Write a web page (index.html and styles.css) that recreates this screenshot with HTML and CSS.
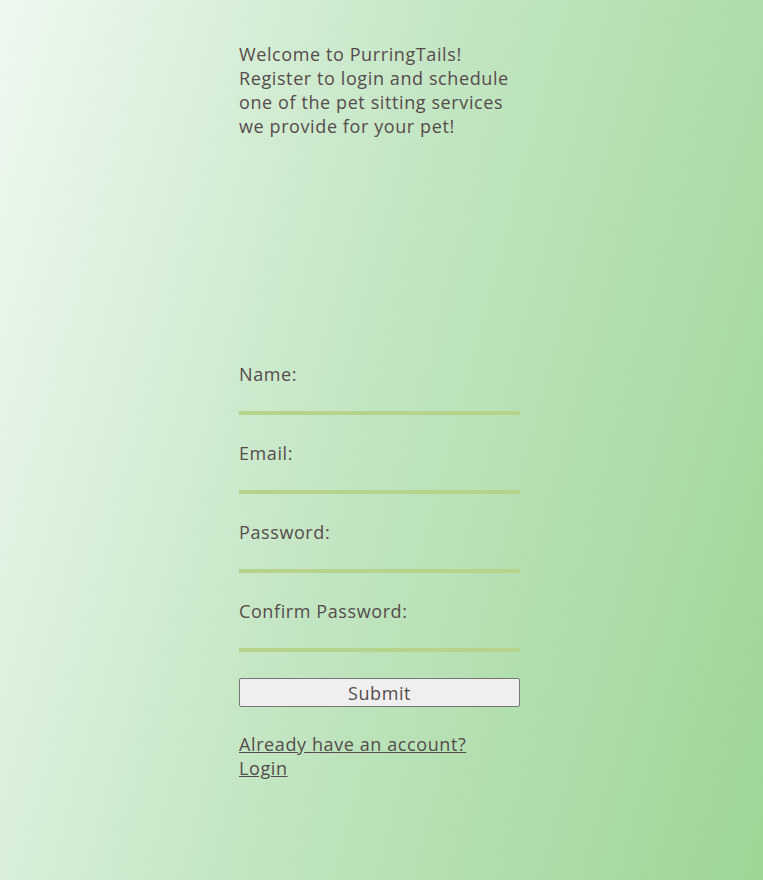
FILE: index.html
```html
<!DOCTYPE html>
<html lang="en">
<head>
<meta charset="utf-8">
<title>PurringTails - Register</title>
<link rel="stylesheet" href="styles.css">
</head>
<body>
<main class="page">
  <p class="intro">Welcome to PurringTails! Register to login and schedule one of the pet sitting services we provide for your pet!</p>
  <form class="form">
    <label class="field">
      <span class="label">Name:</span>
      <input class="input" type="text">
    </label>
    <label class="field">
      <span class="label">Email:</span>
      <input class="input" type="email">
    </label>
    <label class="field">
      <span class="label">Password:</span>
      <input class="input" type="password">
    </label>
    <label class="field">
      <span class="label">Confirm Password:</span>
      <input class="input" type="password">
    </label>
    <button class="submit" type="button">Submit</button>
    <a class="link" href="#">Already have an account? Login</a>
  </form>
</main>
</body>
</html>
```

FILE: styles.css
```css
html, body {
  margin: 0;
  padding: 0;
  height: 100%;
}
body {
  background: linear-gradient(105deg, #eef8ef 0%, #c4e6c4 45%, #9cd694 100%);
  font-family: "Open Sans", "Noto Sans", sans-serif;
  color: #554c4c;
  font-size: 18px;
  letter-spacing: 0.6px;
  line-height: 24px;
}
.page {
  width: 281px;
  margin-left: 239px;
  padding-top: 42px;
}
.intro {
  margin: 0;
  width: 281px;
}
.form {
  display: flex;
  flex-direction: column;
  margin-top: 224px;
}
.field {
  display: flex;
  flex-direction: column;
  margin-bottom: 26px;
}
.label {
  display: block;
  height: 24px;
}
.input {
  margin-top: 11px;
  height: 14px;
  padding: 0;
  border: 0;
  border-bottom: 4px solid #b6d38b;
  background: transparent;
  outline: none;
  width: 281px;
  box-sizing: content-box;
}
.submit {
  height: 29px;
  width: 281px;
  margin-top: 0;
  padding: 0;
  background: #efefef;
  border: 1px solid #767676;
  border-radius: 2px;
  font-family: inherit;
  font-size: 18px;
  letter-spacing: 0.6px;
  color: #554c4c;
}
.link {
  margin-top: 25px;
  color: #554c4c;
  text-decoration: underline;
  width: 240px;
}
```
